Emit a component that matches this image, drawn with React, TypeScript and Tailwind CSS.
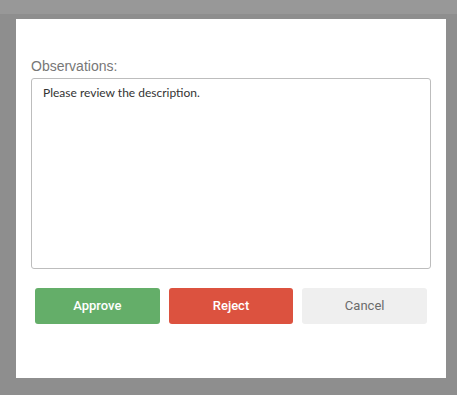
import React, { useState } from 'react';

const App: React.FC = () => {
  const [notes, setNotes] = useState('Please review the description.');

  return (
    <div className="h-[395px] w-[457px] bg-[#8e8e8e] flex flex-col overflow-hidden">
      <div className="h-[14px] bg-[#989898] shrink-0"></div>
      <div className="mt-[5px] ml-[16px] w-[430px] h-[359px] bg-white px-[15px] pt-[37px] flex flex-col">
        <label className="text-[14px] leading-[20px] text-[#777] font-['Liberation_Sans',Arial,sans-serif] mb-[2px]">
          Observations:
        </label>
        <textarea
          value={notes}
          onChange={(e) => setNotes(e.target.value)}
          className="h-[191px] w-full resize-none rounded-[3px] border border-[#bdbdbd] px-[11px] pt-[6px] text-[12px] leading-[15px] text-[#333] font-['Lato',sans-serif] focus:outline-none"
        />
        <div className="mt-[19px] px-[4px] grid grid-cols-3 gap-[9px] font-['Roboto',Arial,sans-serif] text-[13px]">
          <button className="h-[36px] rounded-[3px] bg-[#64ae69] text-white font-medium">Approve</button>
          <button className="h-[36px] rounded-[3px] bg-[#dc523f] text-white font-medium">Reject</button>
          <button className="h-[36px] rounded-[3px] bg-[#efefef] text-[#6b6b6b]">Cancel</button>
        </div>
      </div>
    </div>
  );
};

export default App;
